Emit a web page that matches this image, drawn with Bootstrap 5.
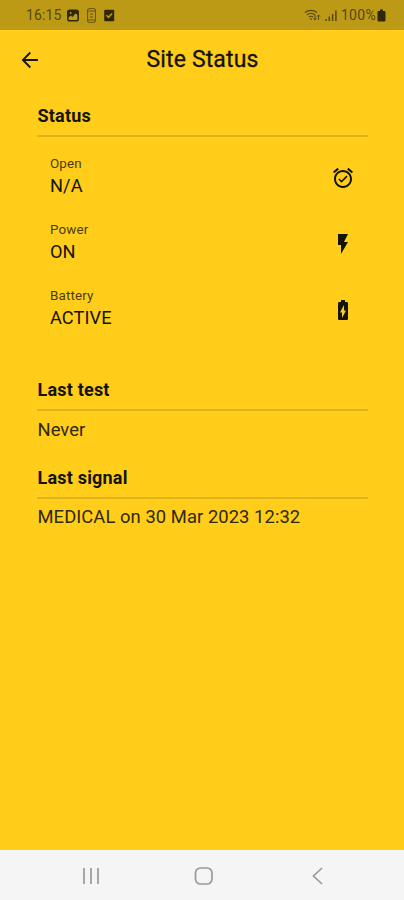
<!DOCTYPE html>
<html lang="en">
<head>
<meta charset="utf-8">
<meta name="viewport" content="width=device-width, initial-scale=1">
<title>Site Status</title>
<link href="https://cdn.jsdelivr.net/npm/bootstrap@5.3.0/dist/css/bootstrap.min.css" rel="stylesheet">
<style>
body { font-family: Roboto, "Liberation Sans", sans-serif; background: #ffcd1a; color: #151206; height: 900px; overflow: hidden; }
svg { display: block; flex: none; }
.sysbar { height: 30px; background: #bd9a16; color: #574711; padding: 0 18px 0 26px; font-size: 14px; }
.clock { letter-spacing: .1px; width: 41px; }
.percent { letter-spacing: .3px; margin-right: 1px; }
.appbar { height: 60px; padding: 0 17px 0 18px; }
.appbar h1 { font-size: 23px; line-height: 28px; font-weight: 400; letter-spacing: .15px; -webkit-text-stroke: .3px currentColor; }
.body-area { padding: 13px 36px 0 37px; }
.sec-title { font-size: 18px; line-height: 26px; font-weight: 700; letter-spacing: .2px; padding: 0 0 6px .5px; margin: 0; border-bottom: 2px solid #dfb31b; }
.status-row { height: 66px; padding: 0 13.5px 0 13px; }
.status-row svg { margin-top: 2px; }
.label { font-size: 13.4px; line-height: 18px; color: #4b3d0d; letter-spacing: .15px; }
.value { font-size: 18.2px; line-height: 26px; letter-spacing: .1px; }
.rows { padding-top: 7px; height: 240px; }
.entry { line-height: 26px; padding: 5.5px 0 0 .5px; height: 53.5px; font-size: 18.4px; letter-spacing: .06px; color: #30280b; }
.navkeys { height: 50px; background: #f5f5f5; color: #999; padding: 2px 75px 0 79px; }
</style>
</head>
<body class="d-flex flex-column">
<header class="sysbar d-flex align-items-center">
  <span class="clock">16:15</span>
  <svg width="12" height="13" viewBox="0 0 12 13"><rect x=".8" y="1.3" width="10.4" height="10.4" rx="1.8" fill="#bd9a16" stroke="#302709" stroke-width="1.5"/><path d="M1 2h10v4L8.3 4.500 5.600 8 3.600 6.500 1 9z" fill="#302709"/><circle cx="3.7" cy="4" r="1" fill="#bd9a16"/></svg>
  <svg class="ms-2" width="9" height="15" viewBox="0 0 9 15" fill="none" stroke="#665313"><rect x=".6" y=".6" width="7.8" height="13.8" rx="1.5"/><path d="M.6 3h7.800M.6 12h7.800M3 6h3M3 9h3"/></svg>
  <svg class="ms-2" width="11" height="13" viewBox="0 0 11 13"><rect x=".2" y=".8" width="10" height="11.4" rx="1" fill="#302709"/><path d="M2.500 6.300l2 2 3.600-3.800" fill="none" stroke="#bd9a16" stroke-width="1.5"/></svg>
  <div class="ms-auto d-flex align-items-center">
    <svg width="17" height="14" viewBox="0 0 17 14" fill="none" stroke="#574711" stroke-width="1.2"><path d="M1 4.400Q7 .2 13 4.400M3 6.800Q7 3.800 11 6.800M5 9Q7 7.500 9 9M7 10v2"/><path d="M11 7v5M9.500 10.500L11 12l1.500-1.500M14.500 12V7M13 8.500L14.500 7 16 8.500" stroke-width="1"/></svg>
    <svg class="ms-1" width="12" height="13" viewBox="0 0 12 13" stroke="#574711" fill="none" stroke-width="1.5"><path d="M1 12v-2M4.300 12V7.500M7.600 12V5M10.900 12V1.500"/></svg>
    <span class="percent ms-1">100%</span>
    <svg width="9" height="13" viewBox="0 0 9 13" fill="#302709"><path d="M3 .5h3V2h1.200Q8.500 2 8.500 3.300v7.900q0 1.300-1.300 1.300H1.800Q.5 12.500.5 11.200V3.300Q.5 2 1.800 2H3z"/></svg>
  </div>
</header>

<nav class="appbar d-flex align-items-center">
  <svg width="24" height="24" viewBox="0 0 24 24" fill="none" stroke="currentColor" stroke-width="1.8"><path d="M20 12H5M12.300 4.500L4.900 12l7.400 7.500"/></svg>
  <h1 class="flex-grow-1 text-center mb-0">Site Status</h1>
  <span class="ps-4"></span>
</nav>

<main class="body-area flex-grow-1">
  <section>
    <h2 class="sec-title">Status</h2>
    <div class="rows">
      <div class="status-row d-flex align-items-center justify-content-between">
        <div><div class="label">Open</div><div class="value">N/A</div></div>
        <svg width="24" height="24" viewBox="0 0 24 24" fill="currentColor"><path d="M22 5.720l-4.600-3.860-1.290 1.530 4.600 3.860L22 5.720zM7.880 3.390L6.600 1.860 2 5.710l1.290 1.530 4.590-3.850zM12 4c-4.970 0-9 4.030-9 9s4.020 9 9 9c4.970 0 9-4.030 9-9s-4.030-9-9-9zm0 16c-3.870 0-7-3.130-7-7s3.130-7 7-7 7 3.130 7 7-3.130 7-7 7zm-1.460-5.470L8.410 12.400l-1.060 1.060 3.180 3.180 6-6-1.060-1.060-4.930 4.950z"/></svg>
      </div>
      <div class="status-row d-flex align-items-center justify-content-between">
        <div><div class="label">Power</div><div class="value">ON</div></div>
        <svg width="24" height="24" viewBox="0 0 24 24" fill="currentColor"><path d="M7 2v11h3v9l7-12h-4l4-8z"/></svg>
      </div>
      <div class="status-row d-flex align-items-center justify-content-between">
        <div><div class="label">Battery</div><div class="value">ACTIVE</div></div>
        <svg width="24" height="24" viewBox="0 0 24 24" fill="currentColor"><path d="M15.670 4H14V2h-4v2H8.330C7.600 4 7 4.600 7 5.330v15.330C7 21.400 7.600 22 8.330 22h7.330c.74 0 1.340-.6 1.340-1.330V5.330C17 4.600 16.400 4 15.670 4zM11 20v-5.500H9L13 7v5.500h2L11 20z"/></svg>
      </div>
    </div>
  </section>
  <section>
    <h2 class="sec-title">Last test</h2>
    <div class="entry">Never</div>
  </section>
  <section>
    <h2 class="sec-title">Last signal</h2>
    <div class="entry">MEDICAL on 30 Mar 2023 12:32</div>
  </section>
</main>

<footer class="navkeys d-flex align-items-center justify-content-between">
  <svg width="24" height="24" viewBox="0 0 24 24" fill="none" stroke="currentColor" stroke-width="1.700"><path d="M5 4v16M12 4v16M19 4v16"/></svg>
  <svg width="24" height="24" viewBox="0 0 24 24" fill="none" stroke="currentColor" stroke-width="1.700"><rect x="3.500" y="4" width="16.500" height="16" rx="5"/></svg>
  <svg width="24" height="24" viewBox="0 0 24 24" fill="none" stroke="currentColor" stroke-width="1.700"><path d="M17 4l-8.500 8 8.500 8"/></svg>
</footer>
<script src="https://cdn.jsdelivr.net/npm/bootstrap@5.3.0/dist/js/bootstrap.bundle.min.js"></script>
</body>
</html>
